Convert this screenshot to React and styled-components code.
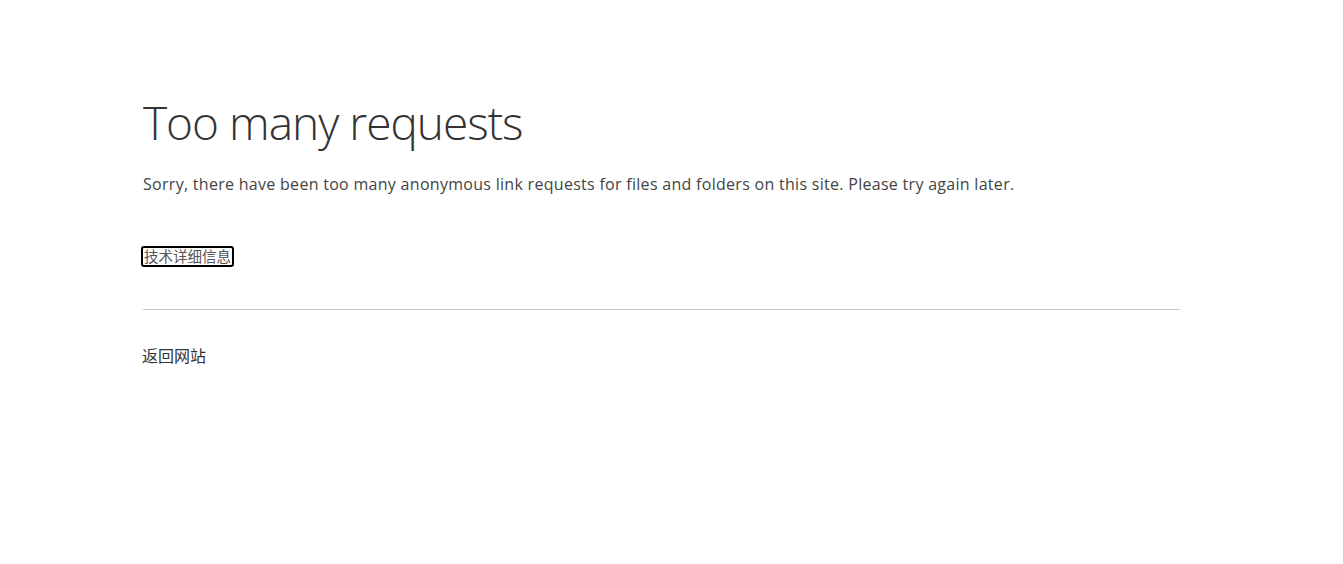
import React from "react";
import styled, { createGlobalStyle } from "styled-components";

const GlobalStyle = createGlobalStyle`
  html, body {
    margin: 0;
    padding: 0;
    background: #ffffff;
  }
  body {
    font-family: "Open Sans", "Noto Sans CJK SC", sans-serif;
    color: #333333;
  }
`;

const Page = styled.div`
  padding: 90px 0 0 143px;
  width: 1037px;
`;

const Title = styled.h1`
  margin: 0;
  font-family: "Open Sans", sans-serif;
  font-weight: 300;
  font-size: 46px;
  line-height: 64px;
  color: #333333;
  letter-spacing: -1px;
`;

const Message = styled.p`
  margin: 18px 0 0;
  font-family: "Open Sans", "Noto Sans CJK SC", sans-serif;
  font-size: 16px;
  line-height: 24px;
  color: #444444;
  letter-spacing: 0.29px;
`;

const DetailsButton = styled.button`
  display: flex;
  align-items: center;
  width: fit-content;
  box-sizing: border-box;
  margin: 50px 0 0 -2px;
  padding: 0 1px 2px;
  height: 21px;
  border: 2px solid #000000;
  border-radius: 3px;
  background: transparent;
  font-family: "Noto Sans CJK SC", sans-serif;
  font-size: 14.5px;
  line-height: 15px;
  color: #555555;
  cursor: pointer;
`;

const Divider = styled.hr`
  margin: 42px 0 0;
  border: 0;
  border-top: 1px solid #c8c8c8;
  height: 0;
`;

const BackLink = styled.a`
  display: block;
  margin-top: 34px;
  margin-left: -1px;
  font-family: "Noto Sans CJK SC", sans-serif;
  font-size: 16px;
  line-height: 22px;
  color: #333333;
  text-decoration: none;
`;

export default function App() {
  return (
    <>
      <GlobalStyle />
      <Page>
        <Title>Too many requests</Title>
        <Message>
          Sorry, there have been too many anonymous link requests for files and
          folders on this site. Please try again later.
        </Message>
        <DetailsButton>技术详细信息</DetailsButton>
        <Divider />
        <BackLink href="#">返回网站</BackLink>
      </Page>
    </>
  );
}
